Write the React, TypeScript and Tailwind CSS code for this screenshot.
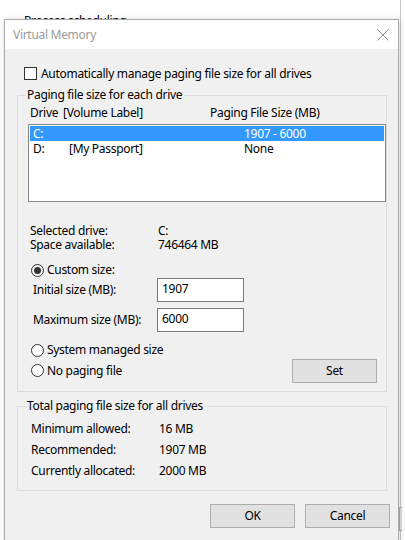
import { useState } from "react";

const ui = "font-['Noto_Sans',sans-serif] text-[12px] leading-[16px] tracking-[-0.3px] text-black";

function CheckBox({ checked }: { checked: boolean }) {
  return (
    <span className="flex h-[13px] w-[13px] items-center justify-center border border-[#333] bg-white">
      {checked && (
        <svg width="9" height="9" viewBox="0 0 9 9">
          <path d="M1 4.5 L3.5 7 L8 1.5" fill="none" stroke="#333" strokeWidth="1.4" />
        </svg>
      )}
    </span>
  );
}

function Radio({ checked, label, onClick }: { checked: boolean; label: string; onClick: () => void }) {
  return (
    <label onClick={onClick} className="flex cursor-default items-center gap-[3px]">
      <span className="flex h-[13px] w-[13px] items-center justify-center rounded-full border border-[#333] bg-white">
        {checked && <span className="h-[7px] w-[7px] rounded-full bg-[#333]" />}
      </span>
      <span>{label}</span>
    </label>
  );
}

function Button({ children, className }: { children: React.ReactNode; className?: string }) {
  return (
    <button
      className={`flex h-[24px] w-[85px] items-center justify-center border border-[#adadad] bg-[#e1e1e1] ${className ?? ""}`}
    >
      {children}
    </button>
  );
}

const DRIVES = [
  { drive: "C:", label: "", size: "1907 - 6000" },
  { drive: "D:", label: "[My Passport]", size: "None" },
];

export default function App() {
  const [auto, setAuto] = useState(false);
  const [mode, setMode] = useState<"custom" | "system" | "none">("custom");
  const [selected, setSelected] = useState(0);

  return (
    <div className={`relative h-[540px] w-[405px] overflow-hidden bg-white ${ui}`}>
      {/* window behind the dialog */}
      <div className="absolute left-[24px] top-[13px] text-[12px]">Process scheduling</div>
      <div className="absolute right-[4px] top-0 h-[540px] w-px bg-[#c9c9c9]" />
      <div className="absolute left-[399px] top-[507px] h-[24px] w-[3px] border border-r-0 border-[#adadad] bg-[#e1e1e1]" />

      {/* dialog */}
      <div className="absolute left-[4px] top-[19px] flex w-[395px] flex-col border border-[#aaaaaa] bg-[#f0f0f0] shadow-[1px_1px_6px_rgba(0,0,0,0.18)]">
        <div className="flex h-[29px] items-center justify-between bg-white pl-[8px] pr-[8px]">
          <span className="text-[#9a9a9a]">Virtual Memory</span>
          <svg width="12" height="12" viewBox="0 0 12 12" className="mr-[1px]">
            <path d="M0.5 0.5 L11.5 11.5 M11.5 0.5 L0.5 11.5" stroke="#8a8a8a" strokeWidth="1" />
          </svg>
        </div>

        <div className="flex flex-col pb-[12px] pl-[12px] pr-[8px]">
          <label onClick={() => setAuto(!auto)} className="ml-[7px] mt-[18px] flex h-[13px] items-center gap-[4px]">
            <CheckBox checked={auto} />
            <span>Automatically manage paging file size for all drives</span>
          </label>

          <fieldset className="mr-[3px] mt-[7px] border border-[#dcdcdc] pb-[9px] pl-[10px] pr-0">
            <legend className="-ml-[3px] px-[2px]">Paging file size for each drive</legend>
            <div className="mt-[2px] flex h-[16px] items-center pl-[2px]">
              <span className="w-[33px]">Drive</span>
              <span className="w-[147px]">[Volume Label]</span>
              <span>Paging File Size (MB)</span>
            </div>
            <div className="mt-[3px] h-[78px] border border-[#828790] bg-white p-px">
              {DRIVES.map((d, i) => (
                <div
                  key={d.drive}
                  onClick={() => setSelected(i)}
                  className={`flex h-[15px] items-center pl-[3px] leading-[15px] ${selected === i ? "bg-[#3399ff] text-white" : ""}`}
                >
                  <span className="w-[36px]">{d.drive}</span>
                  <span className="w-[175px]">{d.label}</span>
                  <span>{d.size}</span>
                </div>
              ))}
            </div>

            <div className="mt-[22px] grid grid-cols-[128px_1fr] auto-rows-[14px] items-center pl-[2px] leading-[14px]">
              <span>Selected drive:</span>
              <span>{DRIVES[selected].drive}</span>
              <span>Space available:</span>
              <span>{selected === 0 ? "746464 MB" : "1907724 MB"}</span>
            </div>

            <div className="ml-[3px] mt-[10px] flex h-[16px] items-center">
              <Radio checked={mode === "custom"} label="Custom size:" onClick={() => setMode("custom")} />
            </div>
            <div className="flex h-[24px] items-center pl-[5px]">
              <span className="w-[124px]">Initial size (MB):</span>
              <input
                defaultValue="1907"
                className="h-[24px] w-[87px] border border-[#7a7a7a] bg-white px-[4px] pb-[4px] outline-none"
              />
            </div>
            <div className="mt-[6px] flex h-[24px] items-center pl-[5px]">
              <span className="w-[124px]">Maximum size (MB):</span>
              <input
                defaultValue="6000"
                className="h-[24px] w-[87px] border border-[#7a7a7a] bg-white px-[4px] pb-[4px] outline-none"
              />
            </div>
            <div className="ml-[3px] mt-[10px] flex h-[16px] items-center">
              <Radio checked={mode === "system"} label="System managed size" onClick={() => setMode("system")} />
            </div>
            <div className="ml-[3px] mt-px flex h-[23px] items-center justify-between pr-[9px]">
              <Radio checked={mode === "none"} label="No paging file" onClick={() => setMode("none")} />
              <Button className="h-[23px]">Set</Button>
            </div>
          </fieldset>

          <fieldset className="mr-[3px] mt-[6px] border border-[#dcdcdc] pb-[9px] pl-[13px]">
            <legend className="-ml-[6px] px-[2px]">Total paging file size for all drives</legend>
            <div className="mt-[4px] grid grid-cols-[128px_1fr] auto-rows-[21px] items-center">
              <span>Minimum allowed:</span>
              <span>16 MB</span>
              <span>Recommended:</span>
              <span>1907 MB</span>
              <span>Currently allocated:</span>
              <span>2000 MB</span>
            </div>
          </fieldset>

          <div className="mt-[13px] flex justify-end gap-[10px]">
            <Button className="ml-[-1px]">OK</Button>
            <Button>Cancel</Button>
          </div>
        </div>
      </div>
    </div>
  );
}
